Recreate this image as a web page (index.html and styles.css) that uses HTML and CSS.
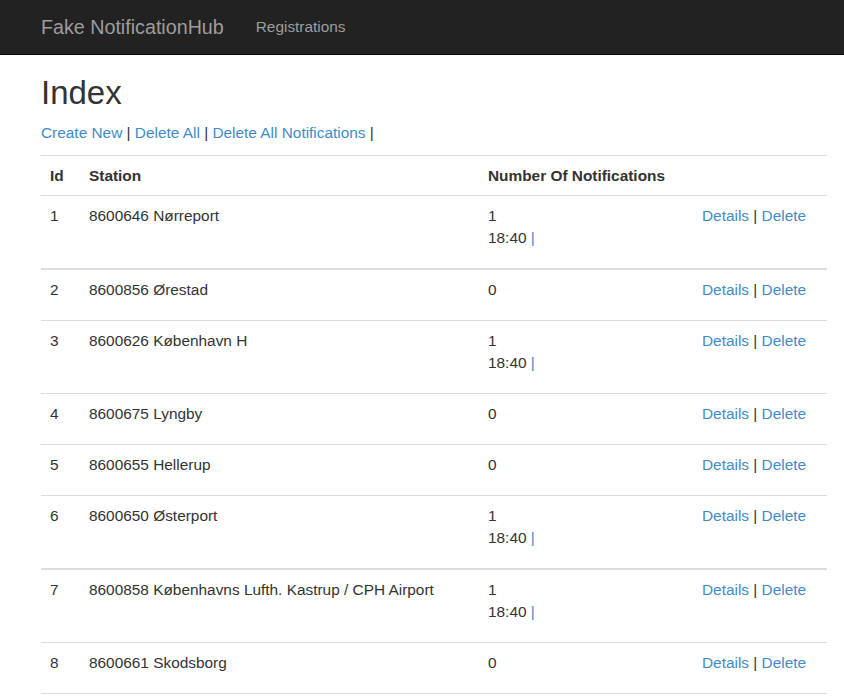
FILE: index.html
```html
<!DOCTYPE html>
<html lang="en">
<head>
<meta charset="utf-8">
<title>Index - Fake NotificationHub</title>
<link rel="stylesheet" href="styles.css">
</head>
<body>
<nav class="navbar">
  <a class="brand" href="#">Fake NotificationHub</a>
  <a class="nav-link" href="#">Registrations</a>
</nav>
<main class="content">
  <h2 class="title">Index</h2>
  <p class="actions">
    <a href="#">Create New</a> | <a href="#">Delete All</a> | <a href="#">Delete All Notifications</a> |
  </p>
  <table class="table">
    <thead>
      <tr>
        <th class="c-id">Id</th>
        <th class="c-station">Station</th>
        <th class="c-num">Number Of Notifications</th>
        <th class="c-act"></th>
      </tr>
    </thead>
    <tbody>
      <tr class="thick">
        <td>1</td><td>8600646 Nørreport</td>
        <td>1<br>18:40 <span class="blue">|</span></td>
        <td><a href="#">Details</a> | <a href="#">Delete</a></td>
      </tr>
      <tr>
        <td>2</td><td>8600856 Ørestad</td>
        <td>0</td>
        <td><a href="#">Details</a> | <a href="#">Delete</a></td>
      </tr>
      <tr>
        <td>3</td><td>8600626 København H</td>
        <td>1<br>18:40 <span class="blue">|</span></td>
        <td><a href="#">Details</a> | <a href="#">Delete</a></td>
      </tr>
      <tr>
        <td>4</td><td>8600675 Lyngby</td>
        <td>0</td>
        <td><a href="#">Details</a> | <a href="#">Delete</a></td>
      </tr>
      <tr>
        <td>5</td><td>8600655 Hellerup</td>
        <td>0</td>
        <td><a href="#">Details</a> | <a href="#">Delete</a></td>
      </tr>
      <tr class="thick">
        <td>6</td><td>8600650 Østerport</td>
        <td>1<br>18:40 <span class="blue">|</span></td>
        <td><a href="#">Details</a> | <a href="#">Delete</a></td>
      </tr>
      <tr>
        <td>7</td><td>8600858 Københavns Lufth. Kastrup / CPH Airport</td>
        <td>1<br>18:40 <span class="blue">|</span></td>
        <td><a href="#">Details</a> | <a href="#">Delete</a></td>
      </tr>
      <tr>
        <td>8</td><td>8600661 Skodsborg</td>
        <td>0</td>
        <td><a href="#">Details</a> | <a href="#">Delete</a></td>
      </tr>
    </tbody>
  </table>
</main>
</body>
</html>
```

FILE: styles.css
```css
html, body {
  margin: 0;
  padding: 0;
  background: #fff;
}
body {
  font-family: "Liberation Sans", Arial, Helvetica, sans-serif;
  font-size: 15.4px;
  line-height: 22px;
  color: #333;
}
a {
  color: #428bca;
  text-decoration: none;
}
.navbar {
  display: flex;
  align-items: center;
  gap: 32px;
  height: 54px;
  background: #222;
  border-bottom: 1px solid #080808;
  padding-left: 41px;
}
.brand {
  color: #9d9d9d;
  font-size: 19.7px;
  line-height: 22px;
}
.nav-link {
  color: #9d9d9d;
  font-size: 15.4px;
}
.content {
  padding: 0 17px 0 41px;
}
.title {
  font-size: 33px;
  font-weight: 500;
  line-height: 36.3px;
  margin: 20px 0 11px;
  color: #333;
}
.actions {
  margin: 0 0 11px;
}
.table {
  width: 100%;
  border-collapse: collapse;
  border-spacing: 0;
  table-layout: fixed;
}
.table th,
.table td {
  text-align: left;
  vertical-align: top;
  padding: 9px 9px 19px;
  border-top: 1px solid #ddd;
}
.table th {
  font-weight: bold;
  padding-bottom: 8px;
  border-bottom: 1px solid #ddd;
}
.table tbody td {
  border-bottom: 1px solid #ddd;
  border-top: none;
}
.table tbody tr.thick td {
  border-bottom-width: 2px;
}
.c-id { width: 21px; }
.c-station { width: 381px; }
.c-num { width: 196px; }
.blue { color: #428bca; }
```
